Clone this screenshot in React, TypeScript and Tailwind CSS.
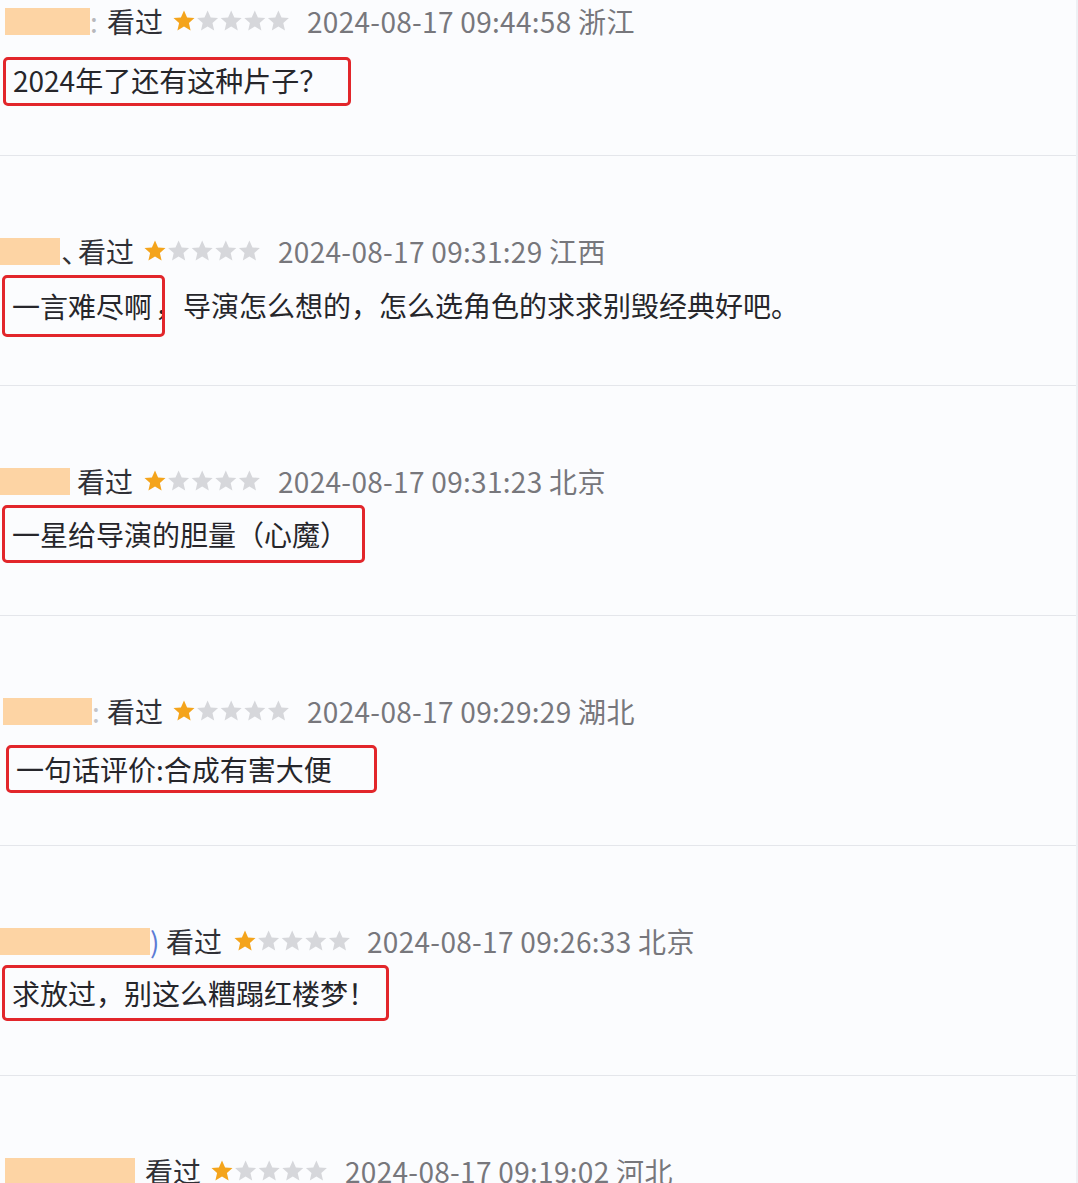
import React from 'react';

type Review = {
  lead: string;
  name: string;
  tail?: string;
  tailBox: string;
  seen: string;
  stars: string;
  date: string;
  box?: string;
  text?: string;
  after?: string;
};

const reviews: Review[] = [
  {
    lead: 'w-[5px]', name: 'w-[85px]', tail: ':', tailBox: 'w-[17px] text-[#b8b8bc]',
    seen: 'w-[65px]', stars: 'w-[135px]', date: '2024-08-17 09:44:58 浙江',
    box: 'ml-[3px] mt-[15px] w-[348px] h-[49px] pb-[4px]', text: '2024年了还有这种片子？',
  },
  {
    lead: 'w-0', name: 'w-[60px]', tail: '､', tailBox: 'w-[18px] text-[#333] pl-[2px]',
    seen: 'w-[65px]', stars: 'w-[135px]', date: '2024-08-17 09:31:29 江西',
    box: 'ml-[2px] mt-[3px] w-[163px] h-[62px]', text: '一言难尽啊',
    after: '，导演怎么想的，怎么选角色的求求别毁经典好吧。',
  },
  {
    lead: 'w-0', name: 'w-[70px]', tailBox: 'w-[7px]',
    seen: 'w-[66px]', stars: 'w-[135px]', date: '2024-08-17 09:31:23 北京',
    box: 'ml-[2px] mt-[3px] w-[363px] h-[58px]', text: '一星给导演的胆量（心魔）',
  },
  {
    lead: 'w-[3px]', name: 'w-[89px]', tail: ':', tailBox: 'w-[15px] text-[#c4c4c8]',
    seen: 'w-[65px]', stars: 'w-[135px]', date: '2024-08-17 09:29:29 湖北',
    box: 'ml-[6px] mt-[13px] w-[371px] h-[48px]', text: '一句话评价:合成有害大便',
  },
  {
    lead: 'w-0', name: 'w-[150px]', tail: ')', tailBox: 'w-[16px] text-[#5b7bd5]',
    seen: 'w-[67px]', stars: 'w-[134px]', date: '2024-08-17 09:26:33 北京',
    box: 'ml-[2px] mt-[3px] w-[387px] h-[56px]', text: '求放过，别这么糟蹋红楼梦！',
  },
  {
    lead: 'w-[5px]', name: 'w-[130px]', tailBox: 'w-[10px]',
    seen: 'w-[65px]', stars: 'w-[135px]', date: '2024-08-17 09:19:02 河北',
  },
];

const STAR = 'M12 1.5l3.1 6.9 7.4.7-5.6 5 1.7 7.3L12 17.6l-6.6 3.8 1.7-7.3-5.6-5 7.4-.7z';

function Stars() {
  return (
    <svg width="120" height="24" viewBox="0 0 120 24">
      {[4, 3, 2, 1, 0].map((i) => (
        <path
          key={i}
          d={STAR}
          transform={`translate(${i * 23.6} 0)`}
          fill={i === 0 ? '#f4a41c' : '#d6d7db'}
        />
      ))}
    </svg>
  );
}

function ReviewBlock({ r }: { r: Review }) {
  return (
    <div className="h-[230px] flex flex-col">
      <div className="h-[156px] border-b border-[#e4e6eb] flex flex-col">
        <div className="h-[42px] flex items-center text-[28px] leading-none">
          <div className={`shrink-0 ${r.lead}`} />
          <div className={`shrink-0 h-[27px] bg-[#fdd4a4] ${r.name}`} />
          <div className={`shrink-0 ${r.tailBox}`}>{r.tail}</div>
          <div className={`shrink-0 text-[#303036] ${r.seen}`}>看过</div>
          <div className={`shrink-0 flex items-center ${r.stars}`}>
            <Stars />
          </div>
          <div className="whitespace-nowrap text-[#77777c] tracking-[0.3px]">{r.date}</div>
        </div>
        {r.text && (
          <div className="flex items-center">
            <div
              className={`shrink-0 flex items-center border-[3px] border-[#e2262b] rounded-[5px] pl-[7px] text-[28px] text-[#26262b] whitespace-nowrap relative z-10 ${r.box}`}
            >
              {r.text}
            </div>
            {r.after && (
              <div className="ml-[-10px] text-[28px] text-[#26262b] whitespace-nowrap">{r.after}</div>
            )}
          </div>
        )}
      </div>
    </div>
  );
}

export default function App() {
  return (
    <div className="w-[1078px] h-[1183px] overflow-hidden bg-[#fbfcfe] border-r-2 border-[#eef0f4] font-['Noto_Sans_CJK_SC','Noto_Sans',sans-serif]">
      {reviews.map((r, i) => (
        <ReviewBlock key={i} r={r} />
      ))}
    </div>
  );
}
